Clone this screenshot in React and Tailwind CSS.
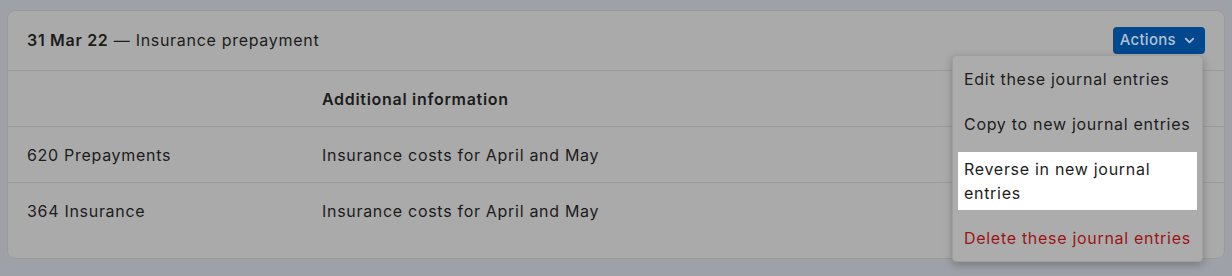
import React from "react";
import { ChevronDown } from "lucide-react";

const rows = [
  { account: "620 Prepayments", info: "Insurance costs for April and May" },
  { account: "364 Insurance", info: "Insurance costs for April and May" },
];

const menuItems = [
  { label: "Edit these journal entries" },
  { label: "Copy to new journal entries" },
  { label: "Reverse in new journal entries", active: true },
  { label: "Delete these journal entries", danger: true },
];

export default function App() {
  return (
    <div
      className="min-h-[276px] bg-[#9ea2a8] px-[7px] pt-[10px] text-[16px] tracking-[0.7px] text-[#1c1c1c]"
      style={{ fontFamily: "Inter, 'Liberation Sans', sans-serif" }}
    >
      {/* JOURNAL CARD */}
      <div className="relative rounded-lg border border-[#9a9a9a] bg-[#aaaaaa] pb-5">
        <div className="flex h-[59px] items-center justify-between pl-[19px] pr-[19px]">
          <div className="-mt-[2px]">
            <span className="font-semibold">31 Mar 22</span> — Insurance prepayment
          </div>
          <button className="flex h-[27px] items-center gap-[6px] rounded bg-[#01488f] pl-[7px] pr-2 text-[15px] font-medium tracking-[0.3px] text-[#b1c1d3]">
            Actions <ChevronDown size={15} strokeWidth={3} />
          </button>
        </div>

        <div className="grid h-14 grid-cols-[295px_1fr] items-center border-t border-[#9c9c9c] px-[19px]">
          <div></div>
          <div className="font-semibold">Additional information</div>
        </div>

        {rows.map((row, i) => (
          <div
            key={i}
            className="grid h-14 grid-cols-[295px_1fr] items-center border-t border-[#9c9c9c] px-[19px]"
          >
            <div>{row.account}</div>
            <div>{row.info}</div>
          </div>
        ))}

        {/* Actions menu */}
        <div className="absolute left-[944px] top-[44px] w-[251px] rounded border border-[#9f9f9f] bg-[#acacac] px-[5px] py-[6px] shadow-[0_3px_8px_rgba(0,0,0,0.25)]">
          <div className="flex flex-col gap-[11px]">
            {menuItems.map((item) => (
              <div
                key={item.label}
                className={`px-[6px] py-[5px] leading-6 ${
                  item.active ? "bg-white" : ""
                } ${item.danger ? "text-[#9b1515]" : ""}`}
              >
                {item.label}
              </div>
            ))}
          </div>
        </div>
      </div>
    </div>
  );
}
